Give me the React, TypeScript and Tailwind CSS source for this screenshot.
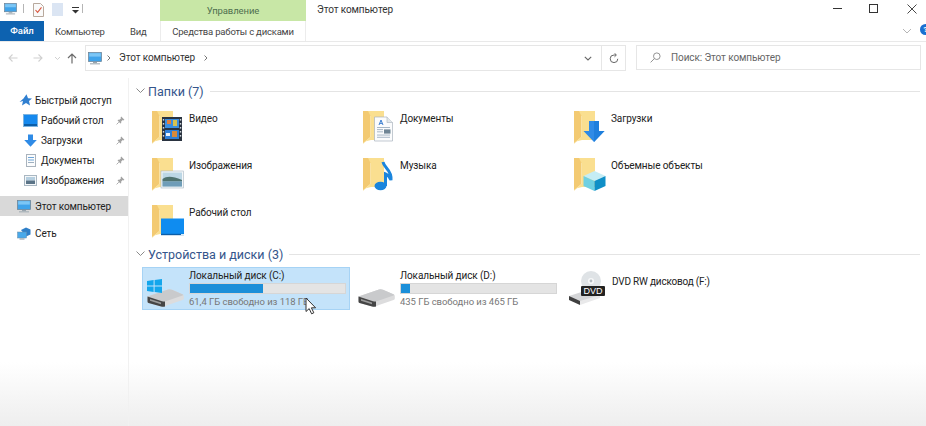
import React from "react";

function Monitor({ w = 14, h = 13 }: { w?: number; h?: number }) {
  return (
    <svg width={w} height={h} viewBox="0 0 14 13" className="shrink-0">
      <rect x="0.5" y="0.5" width="13" height="9" fill="#3fa3ea" stroke="#6b7f91" strokeWidth="0.7" />
      <rect x="1.2" y="1.2" width="11.6" height="3.4" fill="#7cc6f5" />
      <rect x="5" y="10" width="4" height="1.2" fill="#9aa5ae" />
      <rect x="2" y="11.2" width="10" height="1.2" fill="#a9b2b9" />
    </svg>
  );
}

function Pin() {
  return (
    <svg width="9" height="9" viewBox="0 0 9 9" className="shrink-0">
      <path d="M5.2 0.6 L8.4 3.8 L7.6 4.4 L6.8 4 L5.2 5.6 L5.2 7 L4.4 7.4 L1.6 4.6 L2 3.8 L3.4 3.8 L5 2.2 L4.6 1.4 Z" fill="#a3a3a3" />
      <path d="M2.8 6.2 L0.6 8.4" stroke="#a3a3a3" strokeWidth="0.9" />
    </svg>
  );
}

function Folder({ children }: { children?: React.ReactNode }) {
  return (
    <svg width="32" height="34" viewBox="0 0 32 34" className="shrink-0">
      <path d="M0 1 H21 V30 H8 L0 32 Z" fill="#fadf90" />
      <path d="M0 1 H5 L7.5 6 V27 L0 33.5 Z" fill="#f3ca72" />
      <path d="M7.5 6 V27 L0 33.5" fill="none" stroke="#f9e8b4" strokeWidth="0.7" />
      {children}
    </svg>
  );
}

const overlays: Record<string, React.ReactNode> = {
  video: (
    <g>
      <rect x="10" y="7" width="20" height="24" fill="#2a3340" />
      <rect x="13" y="9" width="14" height="9" fill="#3c8fe0" />
      <rect x="13" y="20" width="14" height="9" fill="#2f7fd8" />
      <rect x="15" y="10" width="4" height="4" fill="#e2803d" />
      <rect x="21" y="10" width="4" height="6" fill="#d9c34f" />
      <rect x="20" y="21" width="5" height="6" fill="#d98a3d" />
      <rect x="14" y="23" width="4" height="3" fill="#eaf2fa" />
      <rect x="10.8" y="9" width="1.4" height="1.6" fill="#cfd6dc" />
      <rect x="10.8" y="13" width="1.4" height="1.6" fill="#cfd6dc" />
      <rect x="10.8" y="17" width="1.4" height="1.6" fill="#cfd6dc" />
      <rect x="10.8" y="21" width="1.4" height="1.6" fill="#cfd6dc" />
      <rect x="10.8" y="25" width="1.4" height="1.6" fill="#cfd6dc" />
      <rect x="27.8" y="9" width="1.4" height="1.6" fill="#cfd6dc" />
      <rect x="27.8" y="13" width="1.4" height="1.6" fill="#cfd6dc" />
      <rect x="27.8" y="17" width="1.4" height="1.6" fill="#cfd6dc" />
      <rect x="27.8" y="21" width="1.4" height="1.6" fill="#cfd6dc" />
      <rect x="27.8" y="25" width="1.4" height="1.6" fill="#cfd6dc" />
    </g>
  ),
  docs: (
    <g>
      <path d="M11.5 7 H24 L29.5 12.5 V31 H11.5 Z" fill="#fbfcfd" stroke="#a9b3bd" strokeWidth="0.7" />
      <path d="M24 7 V12.5 H29.5" fill="#e3e8ec" stroke="#a9b3bd" strokeWidth="0.6" />
      <path d="M16 15 L18 10 L20 15 M17 13.4 H19" fill="none" stroke="#3d7fd0" strokeWidth="1" />
      <rect x="14" y="17" width="13" height="0.9" fill="#9fb0c0" />
      <rect x="14" y="19.2" width="6" height="0.9" fill="#9fb0c0" />
      <rect x="21" y="19.4" width="6.5" height="4.2" fill="#6f8595" />
      <rect x="14" y="21.4" width="6" height="0.9" fill="#9fb0c0" />
      <rect x="14" y="24.6" width="13" height="0.9" fill="#9fb0c0" />
      <rect x="14" y="26.8" width="13" height="0.9" fill="#9fb0c0" />
    </g>
  ),
  downloads: (
    <g>
      <path d="M15 11 H25 V21 H30.5 L20 32 L9.5 21 H15 Z" fill="#2f8be6" />
      <path d="M20 11 H25 V21 H30.5 L20 32 Z" fill="#1f7fdc" />
    </g>
  ),
  images: (
    <g>
      <rect x="9" y="14" width="22.5" height="17" fill="#f4f7f9" stroke="#a9b7c2" strokeWidth="0.6" />
      <rect x="10.5" y="15.5" width="19.5" height="14" fill="#bcd7e6" />
      <path d="M10.5 22 C15 19 20 19 30 23 V24.5 H10.5 Z" fill="#4f7370" />
      <rect x="10.5" y="24.5" width="19.5" height="5" fill="#6f9db8" />
    </g>
  ),
  music: (
    <g>
      <path d="M20 5 C21 11 29 13 28 23 C27 20 25 18 22.5 17 V29" fill="none" stroke="#1a85dd" strokeWidth="3" />
      <ellipse cx="17.5" cy="29" rx="6" ry="4.2" fill="#1a85dd" />
    </g>
  ),
  objects: (
    <g>
      <path d="M20.5 14 L31.5 19 L20.5 24 L9.5 19 Z" fill="#c5edf5" />
      <path d="M9.5 19 L20.5 24 V34 L9.5 29 Z" fill="#6fd0e2" />
      <path d="M31.5 19 V29 L20.5 34 V24 Z" fill="#0f8fc7" />
    </g>
  ),
  desktop: (
    <g>
      <rect x="9" y="14.5" width="23" height="16.5" fill="#0f8cf0" />
      <rect x="9" y="29.8" width="23" height="1.4" fill="#0b5ea8" />
      <rect x="29" y="30" width="3" height="1.2" fill="#d7ecfb" />
    </g>
  ),
};

function FolderItem({ name, icon }: { name: string; icon: string }) {
  return (
    <div className="flex h-[47px] items-start">
      <div className="ml-[10px]">
        <Folder>{overlays[icon]}</Folder>
      </div>
      <span className="ml-[5px] mt-[2px] text-[10px] leading-[14px] tracking-[-0.1px] text-[#222]">{name}</span>
    </div>
  );
}

function Drive() {
  return (
    <svg width="37" height="18" viewBox="0 0 37 18" className="shrink-0">
      <path d="M0.5 7.5 L21 0.5 Q23 0 25 0.8 L36 5.5 Q36.8 6 36.8 7 V9.5 Q36.8 10.5 35.5 11 L21 16 Q18 17.8 15 17.7 L1.5 14 Q0.5 13.5 0.5 12.5 Z" fill="#dcdcdd" />
      <path d="M0.5 7.5 L21 0.5 Q23 0 25 0.8 L36 5.5 Q36.5 6 35.5 6.5 L21 11.5 Q18 12.8 15 12.2 Z" fill="#c9cacc" />
      <path d="M0.5 7.5 L15 12.2 Q16.5 12.6 18 12.5 V17.6 Q16.5 17.9 15 17.7 L1.5 14 Q0.5 13.5 0.5 12.5 Z" fill="#454545" />
      <path d="M3 10 L14 13.6 V15.2 L3 11.8 Z" fill="#9a9a9a" />
    </svg>
  );
}

function Windows() {
  return (
    <svg width="15" height="14" viewBox="0 0 15 14" className="shrink-0">
      <path d="M0 2 L6.6 1 V6.5 H0 Z" fill="#13a6ec" />
      <path d="M7.6 0.9 L15 0 V6.5 H7.6 Z" fill="#13a6ec" />
      <path d="M0 7.5 H6.6 V13 L0 12 Z" fill="#13a6ec" />
      <path d="M7.6 7.5 H15 V14 L7.6 13.1 Z" fill="#13a6ec" />
    </svg>
  );
}

function DriveCard({
  name,
  sub,
  pct,
  selected,
  windows,
}: {
  name: string;
  sub: string;
  pct: number;
  selected?: boolean;
  windows?: boolean;
}) {
  return (
    <div
      className={`relative flex h-[43px] w-[208px] items-start border ${
        selected ? "border-[#a6d3f5] bg-[#c4e3fa]" : "border-transparent"
      }`}
    >
      <div className="relative ml-[4px] mt-[21px] w-[37px]">
        {windows ? (
          <div className="absolute left-0 top-[-10px]">
            <Windows />
          </div>
        ) : null}
        <Drive />
      </div>
      <div className="ml-[5px] flex w-[157px] flex-col">
        <span className="h-[15px] text-[10px] leading-[15px] tracking-[-0.1px] text-[#222]">{name}</span>
        <div className="h-[11px] w-[157px] border border-[#d6d6d6] bg-[#e4e4e4]">
          <div className="h-full bg-[#1c8fd9]" style={{ width: `${pct}%` }} />
        </div>
        <span className="h-[15px] text-[9.5px] leading-[15px] tracking-[-0.05px] text-[#777]">{sub}</span>
      </div>
      {selected ? (
        <svg width="12" height="18" viewBox="0 0 12 18" className="absolute left-[162px] top-[29px]">
          <path d="M1 1 V14.5 L4.2 11.6 L6.6 16.8 L8.8 15.8 L6.4 10.8 H10.6 Z" fill="#fff" stroke="#333" strokeWidth="1" />
        </svg>
      ) : null}
    </div>
  );
}

function Dvd() {
  return (
    <svg width="36" height="34" viewBox="0 0 36 34" className="shrink-0">
      <path d="M0 25 L22 18 L34 24 L11 32 Z" fill="#d5d6d8" />
      <path d="M0 25 L11 30 V34 L0 29 Z" fill="#3f3f3f" />
      <path d="M11 30 L31 24 V27 L11 34 Z" fill="#e9e9ea" />
      <circle cx="22" cy="10" r="10" fill="#dfe3e6" />
      <circle cx="22" cy="10" r="3" fill="#f7f8f9" />
      <circle cx="22" cy="10" r="1.4" fill="#b5bcc2" />
      <rect x="12" y="15" width="24" height="10" rx="1" fill="#222" />
      <text x="24" y="23" textAnchor="middle" fontSize="9" fill="#fff" fontFamily="Liberation Sans, sans-serif">DVD</text>
    </svg>
  );
}

function SectionHeader({ title }: { title: string }) {
  return (
    <div className="flex h-[16px] items-center">
      <svg width="9" height="6" viewBox="0 0 9 6" className="ml-[7px] shrink-0">
        <path d="M0.5 0.5 L4.5 4.5 L8.5 0.5" fill="none" stroke="#8a8a8a" strokeWidth="1" />
      </svg>
      <span className="ml-[3px] pt-[1px] text-[12.5px] leading-[16px] text-[#34558b]">{title}</span>
      <div className="ml-[6px] mr-[6px] h-px flex-1 bg-[#e4e4e4]" />
    </div>
  );
}

function SideRow({
  icon,
  label,
  pin,
  indent,
  active,
  className = "",
}: {
  icon: React.ReactNode;
  label: string;
  pin?: boolean;
  indent: string;
  active?: boolean;
  className?: string;
}) {
  return (
    <div className={`flex h-[20px] items-center ${indent} ${active ? "bg-[#d9d9d9]" : ""} ${className}`}>
      {icon}
      <span className="pt-[1px] text-[10px] leading-[14px] tracking-[-0.1px] text-[#222]">{label}</span>
      {pin ? (
        <div className="ml-auto mr-[3px]">
          <Pin />
        </div>
      ) : null}
    </div>
  );
}

export default function App() {
  return (
    <div
      className="flex h-[426px] w-[926px] flex-col overflow-hidden bg-[linear-gradient(to_bottom,#ffffff_0,#ffffff_362px,#eeeeee_426px)]"
      style={{ fontFamily: 'Roboto, "Noto Sans", sans-serif' }}
    >
      {/* title row */}
      <div className="flex h-[21px] items-start">
        <div className="flex w-[160px] items-start">
          <div className="ml-[4px] mt-[3px]">
            <Monitor w={13} h={12} />
          </div>
          <div className="ml-[6px] mt-[4px] h-[9px] w-px bg-[#b5b5b5]" />
          <svg width="11" height="14" viewBox="0 0 11 14" className="ml-[9px] mt-[3px]">
            <path d="M0.5 0.5 H7.5 L10.5 3.5 V13.5 H0.5 Z" fill="#fafafa" stroke="#b8a99d" />
            <path d="M2.5 7 L4.6 9.4 L8.5 4.4" fill="none" stroke="#d9573f" strokeWidth="1.1" />
          </svg>
          <div className="ml-[8px] mt-[3px] h-[13px] w-[11px] bg-[#dbe5f3]" />
          <svg width="7" height="7" viewBox="0 0 7 7" className="ml-[9px] mt-[7px]">
            <rect x="0" y="0" width="7" height="1" fill="#333" />
            <path d="M0 3 H7 L3.5 6.5 Z" fill="#333" />
          </svg>
          <div className="ml-[3px] mt-[4px] h-[9px] w-px bg-[#b5b5b5]" />
        </div>
        <div className="flex h-[21px] w-[146px] items-center justify-center bg-[#c8e7a6] pt-[1px]">
          <span className="text-[9.5px] tracking-[-0.1px] text-[#4f6f4f]">Управление</span>
        </div>
        <span className="ml-[11px] mt-[3px] text-[10px] leading-[14px] tracking-[-0.1px] text-[#333]">Этот компьютер</span>
        <div className="ml-auto flex">
          <div className="mr-[27px] mt-[8px] h-px w-[9px] bg-[#333]" />
          <div className="mr-[29px] mt-[4px] h-[9px] w-[9px] border border-[#333]" />
          <svg width="10" height="10" viewBox="0 0 10 10" className="mr-[9px] mt-[3.5px]">
            <path d="M0.5 0.5 L9.5 9.5 M9.5 0.5 L0.5 9.5" stroke="#333" strokeWidth="0.9" />
          </svg>
        </div>
      </div>
      {/* tabs row */}
      <div className="flex h-[21px] items-start border-b border-[#e9e9e9]">
        <div className="flex h-[20px] w-[44px] items-center justify-center bg-[#0d62b0]">
          <span className="text-[9.5px] font-medium text-white">Файл</span>
        </div>
        <span className="ml-[11px] mt-[4px] w-[75px] text-[9.5px] leading-[14px] tracking-[-0.2px] text-[#444]">Компьютер</span>
        <span className="mt-[4px] w-[30px] text-[9.5px] leading-[14px] tracking-[-0.2px] text-[#444]">Вид</span>
        <div className="flex h-[20px] w-[146px] items-center justify-center border-x border-[#ececec] pt-[1px]">
          <span className="text-[9.5px] leading-[14px] tracking-[-0.2px] text-[#444]">Средства работы с дисками</span>
        </div>
        <svg width="10" height="6" viewBox="0 0 10 6" className="ml-auto mr-[8px] mt-[7px]">
          <path d="M1 1 L5 5 L9 1" fill="none" stroke="#b5b5b5" />
        </svg>
        <div className="mr-[-5px] mt-[3px] flex h-[11px] w-[11px] items-center justify-center rounded-full bg-[#1a6fd0]">
          <span className="text-[8px] font-bold leading-[11px] text-white">?</span>
        </div>
      </div>
      {/* address row */}
      <div className="flex h-[29px] items-start pt-[3px]">
        <div className="flex h-[26px] w-[85px] items-center">
          <svg width="10" height="10" viewBox="0 0 10 10" className="ml-[8px]">
            <path d="M9.5 5 H1 M4.5 1.5 L1 5 L4.5 8.5" fill="none" stroke="#d0d0d0" strokeWidth="1.1" />
          </svg>
          <svg width="10" height="10" viewBox="0 0 10 10" className="ml-[15px]">
            <path d="M0.5 5 H9 M5.5 1.5 L9 5 L5.5 8.5" fill="none" stroke="#d0d0d0" strokeWidth="1.1" />
          </svg>
          <svg width="7" height="5" viewBox="0 0 7 5" className="ml-[11px]">
            <path d="M1 1 L3.5 3.5 L6 1" fill="none" stroke="#d0d0d0" />
          </svg>
          <svg width="10" height="11" viewBox="0 0 10 11" className="ml-[6px]">
            <path d="M5 10.5 V1 M1 5 L5 1 L9 5" fill="none" stroke="#6b6b6b" strokeWidth="1.2" />
          </svg>
        </div>
        <div className="flex h-[26px] w-[541px] items-center border border-[#e6e6e6]">
          <div className="ml-[2px]">
            <Monitor w={14} h={13} />
          </div>
          <svg width="4" height="6" viewBox="0 0 4 6" className="ml-[5px]">
            <path d="M0.5 0.5 L3 3 L0.5 5.5" fill="none" stroke="#777" />
          </svg>
          <span className="ml-[8px] text-[10px] leading-[14px] tracking-[-0.1px] text-[#333]">Этот компьютер</span>
          <svg width="4" height="6" viewBox="0 0 4 6" className="ml-[9px]">
            <path d="M0.5 0.5 L3 3 L0.5 5.5" fill="none" stroke="#777" />
          </svg>
          <svg width="8" height="5" viewBox="0 0 8 5" className="ml-auto mr-[9px]">
            <path d="M0.8 0.8 L4 4 L7.2 0.8" fill="none" stroke="#666" strokeWidth="1.1" />
          </svg>
          <div className="flex h-full w-[24px] items-center justify-center border-l border-[#e6e6e6]">
            <svg width="10" height="11" viewBox="0 0 10 11">
              <path d="M8.8 5.8 A3.8 3.8 0 1 1 5 2 H7 M5.5 0.2 L7.4 2 L5.5 3.8" fill="none" stroke="#666" strokeWidth="1" />
            </svg>
          </div>
        </div>
        <div className="ml-[10px] flex h-[25px] w-[285px] items-center border border-[#e6e6e6]">
          <svg width="11" height="11" viewBox="0 0 11 11" className="ml-[13px]">
            <circle cx="6.8" cy="4.2" r="3.3" fill="none" stroke="#888" strokeWidth="0.9" />
            <path d="M4.4 6.6 L0.6 10.4" stroke="#888" strokeWidth="0.9" />
          </svg>
          <span className="ml-[10px] text-[10px] leading-[14px] tracking-[-0.1px] text-[#666]">Поиск: Этот компьютер</span>
        </div>
      </div>
      {/* main */}
      <div className="mt-[7px] flex flex-1">
        {/* sidebar */}
        <div className="flex w-[129px] flex-col border-r border-[#f1f1f1] pt-[12px]">
          <SideRow
            indent="pl-[19px]"
            label="Быстрый доступ"
            icon={
              <svg width="13" height="12" viewBox="0 0 13 12" className="mr-[3px]">
                <path d="M7.5 0.3 L9 4.2 L13 4.4 L10 7 L11 11.5 L7 9 L3 11.5 L4 7 L0.5 8 L4.5 4.4 Z" fill="#2f7fd0" />
              </svg>
            }
          />
          <SideRow
            indent="pl-[24px]"
            label="Рабочий стол"
            pin
            icon={
              <div className="mr-[4px] h-[11px] w-[13px] border-b-2 border-[#0b5ea8] bg-[#1689ee] outline outline-[0.5px] outline-[#7db4e0]" />
            }
          />
          <SideRow
            indent="pl-[24px]"
            label="Загрузки"
            pin
            icon={
              <svg width="13" height="13" viewBox="0 0 13 13" className="mr-[4px]">
                <path d="M4 0.5 H9 V6 H12.8 L6.5 12.8 L0.2 6 H4 Z" fill="#2f8be6" />
              </svg>
            }
          />
          <SideRow
            indent="pl-[26px]"
            label="Документы"
            pin
            icon={
              <svg width="10" height="13" viewBox="0 0 10 13" className="mr-[5px]">
                <rect x="0.5" y="0.5" width="9" height="12" fill="#fbfcfd" stroke="#a9b3bd" />
                <rect x="2" y="3" width="6" height="1" fill="#6fa5d8" />
                <rect x="2" y="5.5" width="6" height="1" fill="#6fa5d8" />
                <rect x="2" y="8" width="6" height="1" fill="#9fb0c0" />
              </svg>
            }
          />
          <SideRow
            indent="pl-[24px]"
            label="Изображения"
            pin
            icon={
              <svg width="13" height="11" viewBox="0 0 13 11" className="mr-[4px]">
                <rect x="0.5" y="0.5" width="12" height="10" fill="#f4f7f9" stroke="#a9b7c2" />
                <rect x="2" y="2" width="9" height="3.5" fill="#b6cfe0" />
                <rect x="2" y="5.5" width="9" height="3.5" fill="#5b7487" />
              </svg>
            }
          />
          <SideRow
            active
            className="mt-[6px]"
            indent="pl-[17px]"
            label="Этот компьютер"
            icon={
              <div className="mr-[4px]">
                <Monitor w={14} h={13} />
              </div>
            }
          />
          <SideRow
            className="mt-[7px]"
            indent="pl-[17px]"
            label="Сеть"
            icon={
              <svg width="14" height="13" viewBox="0 0 14 13" className="mr-[4px]">
                <path d="M4 3 L9 0.5 L13.5 2.5 V7.5 L9 9.5 Z" fill="#2f7fc8" />
                <rect x="0.5" y="5" width="9" height="6" fill="#49a9ea" stroke="#6e8ea8" strokeWidth="0.5" />
                <rect x="2.5" y="11.4" width="5" height="1.2" fill="#9aa5ae" />
              </svg>
            }
          />
        </div>
        {/* content */}
        <div className="flex flex-1 flex-col pt-[5px]">
          <SectionHeader title="Папки (7)" />
          <div className="mt-[11px] grid grid-cols-[211px_211px_211px] pl-[13px]">
            <FolderItem name="Видео" icon="video" />
            <FolderItem name="Документы" icon="docs" />
            <FolderItem name="Загрузки" icon="downloads" />
            <FolderItem name="Изображения" icon="images" />
            <FolderItem name="Музыка" icon="music" />
            <FolderItem name="Объемные объекты" icon="objects" />
            <FolderItem name="Рабочий стол" icon="desktop" />
          </div>
          <div className="mt-[-5px]">
            <SectionHeader title="Устройства и диски (3)" />
          </div>
          <div className="mt-[5px] flex gap-[3px] pl-[13px]">
            <DriveCard name="Локальный диск (C:)" sub="61,4 ГБ свободно из 118 ГБ" pct={47} selected windows />
            <DriveCard name="Локальный диск (D:)" sub="435 ГБ свободно из 465 ГБ" pct={6} />
            <div className="ml-[5px] flex h-[43px] items-start">
              <div className="mt-[4px]">
                <Dvd />
              </div>
              <span className="ml-[7px] mt-[7px] text-[10px] leading-[15px] tracking-[-0.2px] text-[#222]">DVD RW дисковод (F:)</span>
            </div>
          </div>
        </div>
      </div>
    </div>
  );
}
